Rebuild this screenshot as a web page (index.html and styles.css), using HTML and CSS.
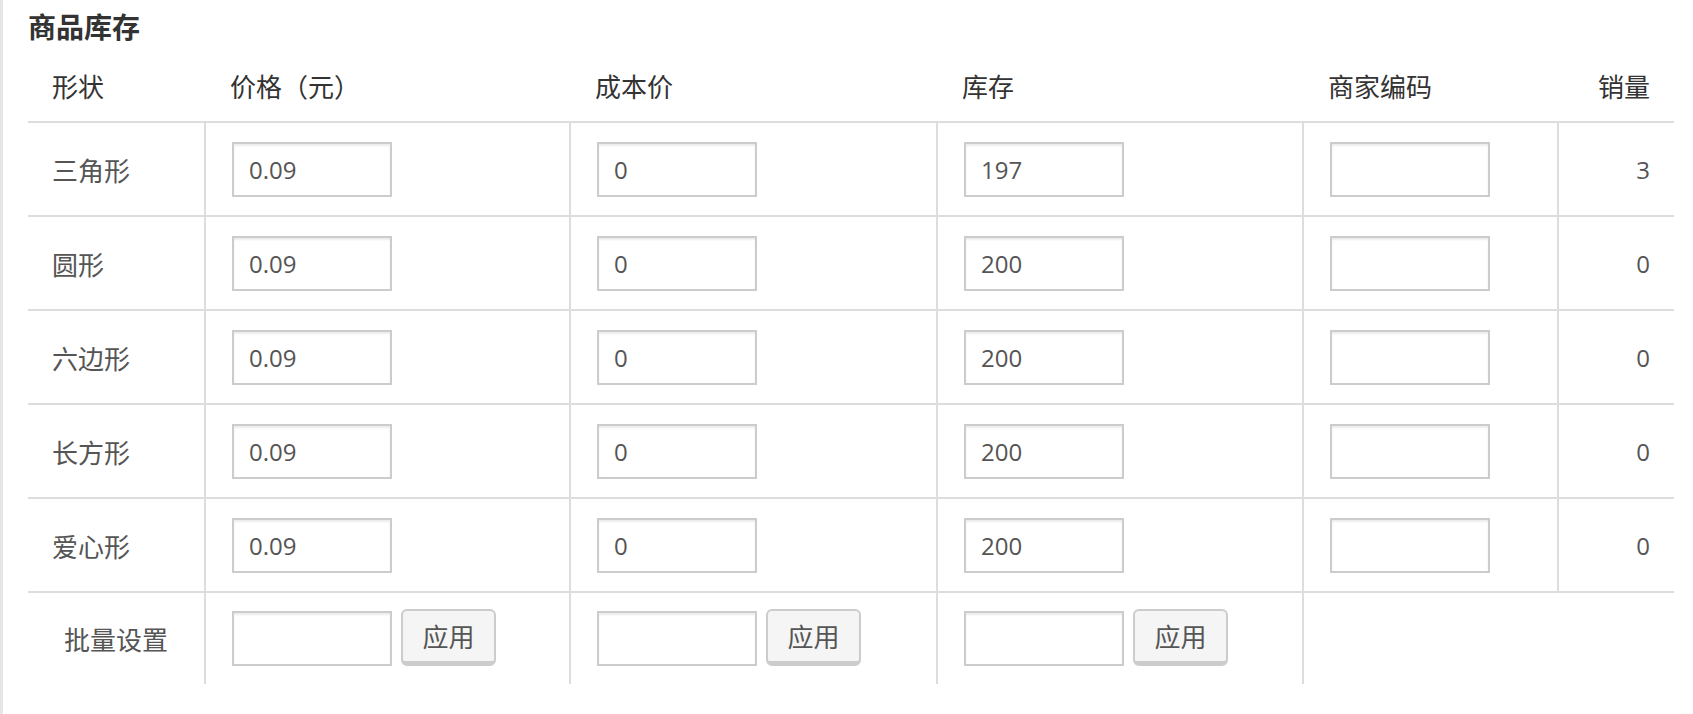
FILE: index.html
```html
<!DOCTYPE html>
<html lang="zh-CN">
<head>
<meta charset="utf-8">
<title>商品库存</title>
<link rel="stylesheet" href="styles.css">
</head>
<body>
<div class="page">
  <h3 class="title">商品库存</h3>
  <div class="sku-table">
    <div class="row head">
      <div class="cell first">形状</div>
      <div class="cell">价格（元）</div>
      <div class="cell">成本价</div>
      <div class="cell">库存</div>
      <div class="cell">商家编码</div>
      <div class="cell num">销量</div>
    </div>
    <div class="row data">
      <div class="cell first">三角形</div>
      <div class="cell"><input class="field" type="text" value="0.09"></div>
      <div class="cell"><input class="field" type="text" value="0"></div>
      <div class="cell"><input class="field" type="text" value="197"></div>
      <div class="cell"><input class="field" type="text" value=""></div>
      <div class="cell num">3</div>
    </div>
    <div class="row data">
      <div class="cell first">圆形</div>
      <div class="cell"><input class="field" type="text" value="0.09"></div>
      <div class="cell"><input class="field" type="text" value="0"></div>
      <div class="cell"><input class="field" type="text" value="200"></div>
      <div class="cell"><input class="field" type="text" value=""></div>
      <div class="cell num">0</div>
    </div>
    <div class="row data">
      <div class="cell first">六边形</div>
      <div class="cell"><input class="field" type="text" value="0.09"></div>
      <div class="cell"><input class="field" type="text" value="0"></div>
      <div class="cell"><input class="field" type="text" value="200"></div>
      <div class="cell"><input class="field" type="text" value=""></div>
      <div class="cell num">0</div>
    </div>
    <div class="row data">
      <div class="cell first">长方形</div>
      <div class="cell"><input class="field" type="text" value="0.09"></div>
      <div class="cell"><input class="field" type="text" value="0"></div>
      <div class="cell"><input class="field" type="text" value="200"></div>
      <div class="cell"><input class="field" type="text" value=""></div>
      <div class="cell num">0</div>
    </div>
    <div class="row data">
      <div class="cell first">爱心形</div>
      <div class="cell"><input class="field" type="text" value="0.09"></div>
      <div class="cell"><input class="field" type="text" value="0"></div>
      <div class="cell"><input class="field" type="text" value="200"></div>
      <div class="cell"><input class="field" type="text" value=""></div>
      <div class="cell num">0</div>
    </div>
    <div class="row batch">
      <div class="cell first center">批量设置</div>
      <div class="cell bottom"><input class="field" type="text" value=""><button class="btn" type="button">应用</button></div>
      <div class="cell bottom"><input class="field" type="text" value=""><button class="btn" type="button">应用</button></div>
      <div class="cell bottom"><input class="field" type="text" value=""><button class="btn" type="button">应用</button></div>
      <div class="cell span2"></div>
    </div>
  </div>
</div>
</body>
</html>
```

FILE: styles.css
```css
* { box-sizing: border-box; }

html, body {
  margin: 0;
  background: #fff;
}

body {
  font-family: "Open Sans", "Noto Sans CJK SC", sans-serif;
  color: #555;
}

.page {
  border-left: 3px solid #e6e6e6;
  min-height: 714px;
  padding-left: 25px;
}

.title {
  margin: 0;
  height: 54px;
  line-height: 53px;
  font-size: 28px;
  font-weight: 700;
  color: #333;
  font-family: "Noto Sans CJK SC", sans-serif;
}

.sku-table {
  width: 1646px;
}

.row {
  display: grid;
  grid-template-columns: 176px 365px 367px 366px 255px 117px;
  border-bottom: 2px solid #ddd;
}

.row.head { height: 69px; }
.row.data { height: 94px; }
.row.batch { height: 91px; border-bottom: none; }

.cell {
  display: flex;
  align-items: center;
  padding: 0 26px;
  border-left: 2px solid #ddd;
  font-size: 26px;
  font-family: "Noto Sans CJK SC", sans-serif;
  color: #555;
}

.cell.first {
  border-left: none;
  padding-left: 24px;
}

.head .cell {
  border-left: none;
  color: #333;
  padding-bottom: 4px;
}

.head .cell.first { padding-left: 24px; }

.cell.num {
  justify-content: flex-end;
  padding-right: 24px;
}

.data .cell.num {
  font-family: "Open Sans", sans-serif;
  font-size: 24px;
}

.cell.center {
  justify-content: center;
  padding: 0;
}

.cell.bottom {
  align-items: center;
}

.cell.span2 {
  grid-column: span 2;
}

.field {
  width: 160px;
  height: 55px;
  margin: 0;
  border: 2px solid #ccc;
  border-radius: 0;
  background: #fff;
  box-shadow: inset 0 2px 2px rgba(0, 0, 0, 0.075);
  padding: 0 15px;
  font-family: "Open Sans", sans-serif;
  font-size: 24px;
  color: #555;
  outline: none;
}

.btn {
  width: 95px;
  height: 57px;
  margin: -2px 0 0 9px;
  border: 2px solid #ccc;
  border-bottom-width: 5px;
  border-radius: 6px;
  background: #f5f5f5;
  font-family: "Noto Sans CJK SC", sans-serif;
  font-size: 26px;
  color: #555;
  padding: 0;
  line-height: 1;
}
```
